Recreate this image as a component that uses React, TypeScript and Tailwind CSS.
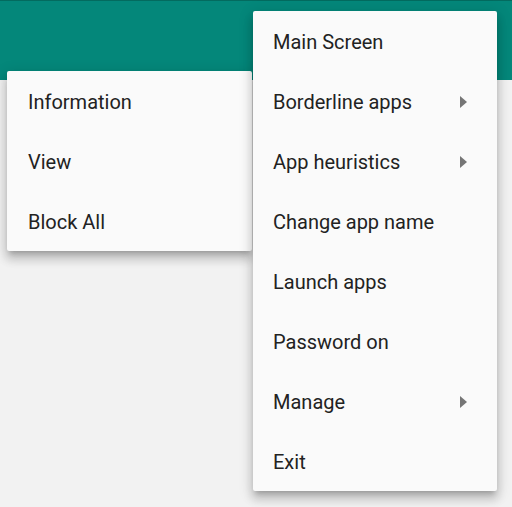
import React from 'react';

const font = { fontFamily: 'Roboto, "Noto Sans", sans-serif' };

type Item = { label: string; sub?: boolean };

const mainItems: Item[] = [
  { label: 'Main Screen' },
  { label: 'Borderline apps', sub: true },
  { label: 'App heuristics', sub: true },
  { label: 'Change app name' },
  { label: 'Launch apps' },
  { label: 'Password on' },
  { label: 'Manage', sub: true },
  { label: 'Exit' },
];

const subItems: Item[] = [{ label: 'Information' }, { label: 'View' }, { label: 'Block All' }];

function Arrow() {
  return (
    <svg width="7" height="12" viewBox="0 0 7 12" className="shrink-0">
      <path d="M0 0 L7 6 L0 12 Z" fill="#757575" />
    </svg>
  );
}

function Menu({ items, className }: { items: Item[]; className: string }) {
  return (
    <div
      className={`absolute bg-[#fafafa] rounded-[2px] shadow-[0_5px_5px_-3px_rgba(0,0,0,0.2),0_8px_10px_1px_rgba(0,0,0,0.14),0_3px_14px_2px_rgba(0,0,0,0.12)] ${className}`}
    >
      {items.map((it) => (
        <div key={it.label} className="h-[60px] flex items-center pt-[2px] pr-[30px] text-[20px] text-[#222222]">
          <span className="flex-1">{it.label}</span>
          {it.sub && <Arrow />}
        </div>
      ))}
    </div>
  );
}

export default function App() {
  return (
    <div className="relative w-[512px] h-[507px] overflow-hidden bg-[#f2f2f2]" style={font}>
      <div className="h-20 bg-[#04877a] border-t border-[#036b5f]"></div>
      <Menu items={subItems} className="left-[7px] top-[71px] w-[245px] pl-[21px]" />
      <Menu items={mainItems} className="left-[253px] top-[11px] w-[244px] pl-5" />
    </div>
  );
}
